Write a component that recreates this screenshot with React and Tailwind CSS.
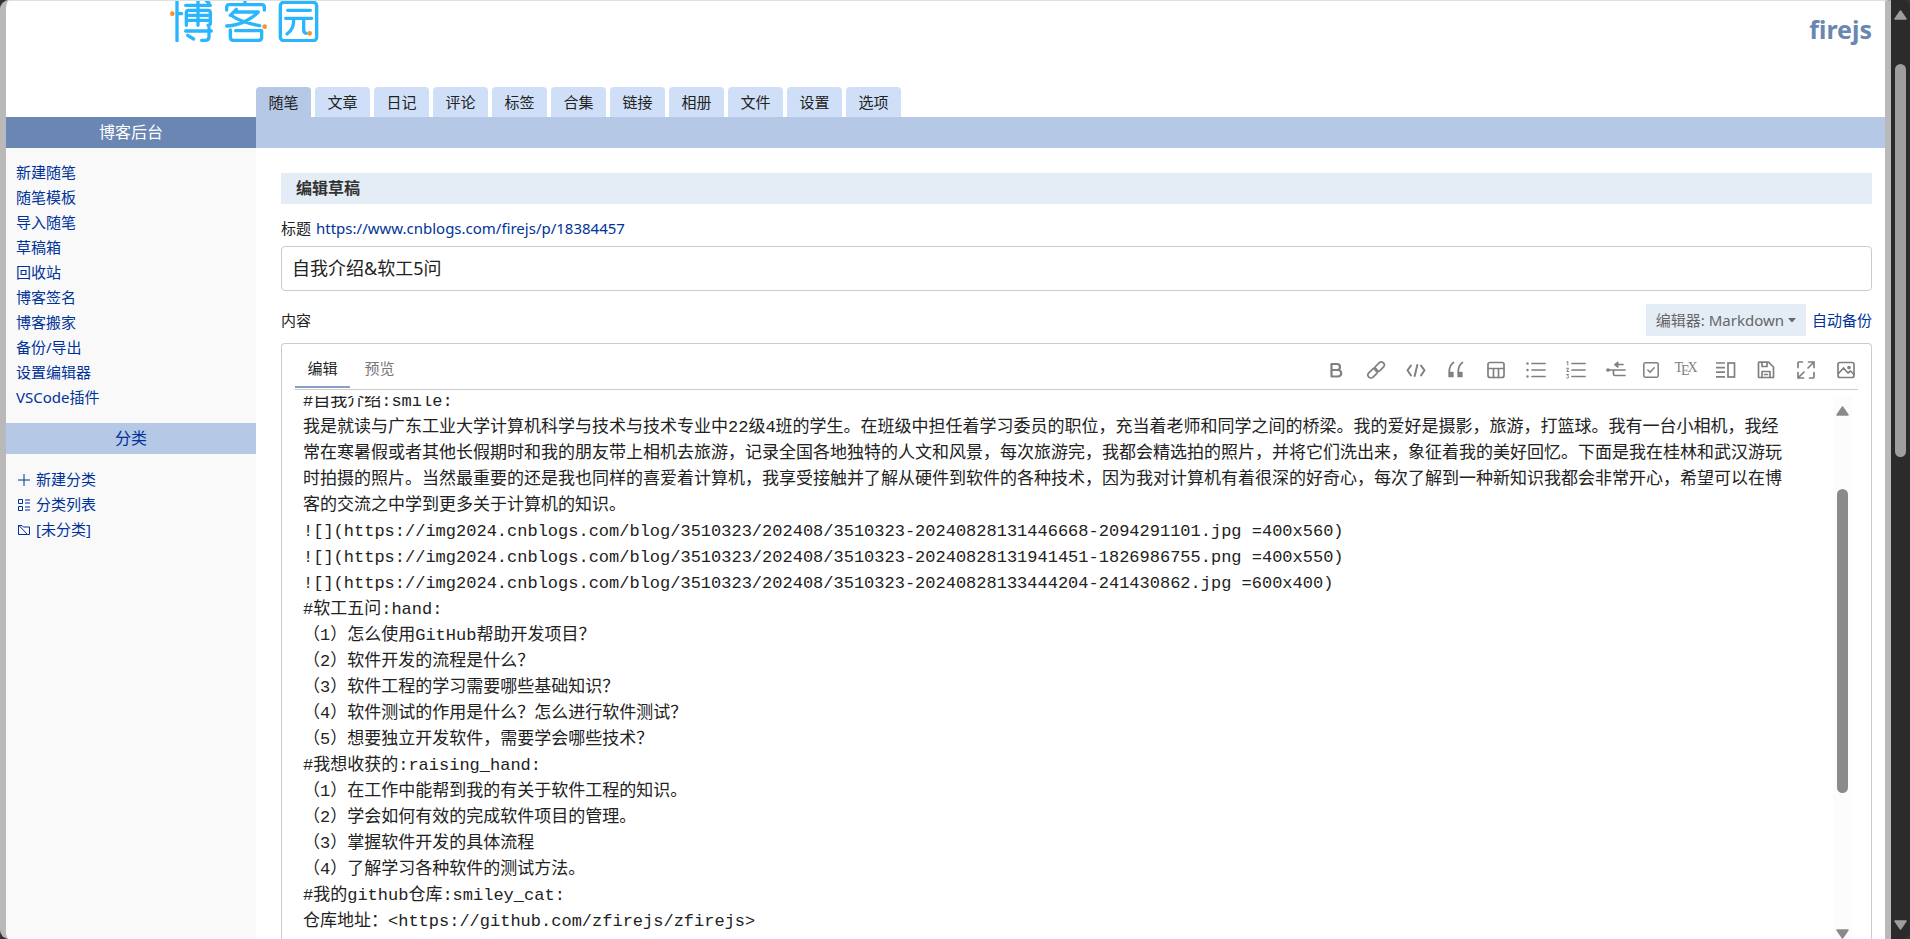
import { useEffect, useRef, useState } from 'react';
import clsx from 'clsx';

const tabs = ['随笔', '文章', '日记', '评论', '标签', '合集', '链接', '相册', '文件', '设置', '选项'];

const links = [
  '新建随笔',
  '随笔模板',
  '导入随笔',
  '草稿箱',
  '回收站',
  '博客签名',
  '博客搬家',
  '备份/导出',
  '设置编辑器',
  'VSCode插件',
];

const draft = `#自我介绍:smile:
我是就读与广东工业大学计算机科学与技术与技术专业中22级4班的学生。在班级中担任着学习委员的职位，充当着老师和同学之间的桥梁。我的爱好是摄影，旅游，打篮球。我有一台小相机，我经常在寒暑假或者其他长假期时和我的朋友带上相机去旅游，记录全国各地独特的人文和风景，每次旅游完，我都会精选拍的照片，并将它们洗出来，象征着我的美好回忆。下面是我在桂林和武汉游玩时拍摄的照片。当然最重要的还是我也同样的喜爱着计算机，我享受接触并了解从硬件到软件的各种技术，因为我对计算机有着很深的好奇心，每次了解到一种新知识我都会非常开心，希望可以在博客的交流之中学到更多关于计算机的知识。
![](https://img2024.cnblogs.com/blog/3510323/202408/3510323-20240828131446668-2094291101.jpg =400x560)
![](https://img2024.cnblogs.com/blog/3510323/202408/3510323-20240828131941451-1826986755.png =400x550)
![](https://img2024.cnblogs.com/blog/3510323/202408/3510323-20240828133444204-241430862.jpg =600x400)
#软工五问:hand:
（1）怎么使用GitHub帮助开发项目？
（2）软件开发的流程是什么？
（3）软件工程的学习需要哪些基础知识？
（4）软件测试的作用是什么？怎么进行软件测试？
（5）想要独立开发软件，需要学会哪些技术？
#我想收获的:raising_hand:
（1）在工作中能帮到我的有关于软件工程的知识。
（2）学会如何有效的完成软件项目的管理。
（3）掌握软件开发的具体流程
（4）了解学习各种软件的测试方法。
#我的github仓库:smiley_cat:
仓库地址：<https://github.com/zfirejs/zfirejs>`;

const Logo = () => (
  <svg width="160" height="42" viewBox="0 0 480 126" role="img" aria-label="博客园">
    <g fill="none" stroke="#29b6ff" strokeWidth="10" strokeLinecap="round" strokeLinejoin="round">
      <path d="M36 -4V122M36 41H50" />
      <path d="M62 16H136M99 -4V76M124 3L132 9M64 76V38Q64 31 71 31H129Q136 31 136 38V70Q136 76 129 76M64 46H134M64 61H134" />
      <path d="M62 93H139M132 84V110Q132 121 121 121H110M68 106L86 117" />
      <path d="M185 30V22Q185 14 193 14H290Q298 14 298 22V30M240 0V12" />
      <path d="M214 28L196 46M208 36H280Q270 48 244 62Q218 76 185 78M202 48Q226 66 284 77" />
      <path d="M196 90V112Q196 121 205 121H281Q290 121 290 112V92H212" />
      <rect x="346" y="7" width="109" height="115" rx="10" />
      <path d="M368 31H436M362 55H440M386 58Q388 86 366 102M416 58V88Q416 100 424 100" />
    </g>
    <g fill="#ff8f28">
      <circle cx="22" cy="41" r="7" />
      <circle cx="299" cy="80" r="7" />
      <circle cx="434" cy="100" r="7" />
    </g>
  </svg>
);

const Icon = ({ children, size = 20 }) => (
  <svg
    width={size}
    height={size}
    viewBox="0 0 20 20"
    fill="none"
    stroke="currentColor"
    strokeWidth="1.7"
    strokeLinecap="round"
    strokeLinejoin="round"
    aria-hidden="true"
  >
    {children}
  </svg>
);

const tools = [
  { name: '加粗', icon: <path strokeWidth="2.2" d="M5.5 4H11a3 3 0 0 1 0 6H5.5zM5.5 10H12a3.2 3.2 0 0 1 0 6.500H5.500z" /> },
  {
    name: '链接',
    icon: (
      <>
        <rect x="8" y="3.800" width="11" height="6" rx="3" transform="rotate(-45 13.500 6.800)" />
        <rect x="1.200" y="10.200" width="11" height="6" rx="3" transform="rotate(-45 6.700 13.200)" />
      </>
    ),
  },
  { name: '代码', icon: <path strokeWidth="2" d="M5 5.500L1.500 10.300L5 15.500M15 5.500L18.500 10.300L15 15.500M11.300 5L8.700 16" /> },
  {
    name: '引用',
    icon: (
      <>
        <path d="M7.500 2.500Q3.300 5.500 3.200 12M16.500 2.500Q12.300 5.500 12.200 12" />
        <path fill="currentColor" d="M3.200 12.500h3.600v4H3.200zM12.200 12.500h3.600v4h-3.600z" />
      </>
    ),
  },
  {
    name: '表格',
    icon: (
      <>
        <rect x="2" y="2.500" width="16" height="15" rx="2" />
        <path d="M2 8.500H18M7.500 8.500V17.500M12.500 8.500V17.500" />
      </>
    ),
  },
  {
    name: '无序列表',
    icon: (
      <>
        <path d="M6 3.500H19M6 10H19M6 16.500H19" />
        <path strokeWidth="2.500" d="M1.500 3.500h0M1.500 10h0M1.500 16.500h0" />
      </>
    ),
  },
  {
    name: '有序列表',
    icon: (
      <>
        <path d="M6 3.500H19M6 10H19M6 16.500H19" />
        <path strokeWidth="1" d="M.8 2L1.800 1.500V5M.6 8.300H2.600L.8 11.500H2.800M.6 14.500H2.600L1.600 16Q3 16.500 2.400 17.700Q1.500 18.600.6 18" />
      </>
    ),
  },
  {
    name: '流程图',
    icon: (
      <>
        <path d="M2.500 10H19M7.500 10V14Q7.500 15.500 9 15.500H19M10 4.500H17" />
        <path fill="currentColor" strokeWidth="1" d="M8.500 4.500L12 1.800V7.200z" />
        <circle cx="2" cy="10" r="1" fill="currentColor" />
      </>
    ),
  },
  {
    name: '任务列表',
    narrow: true,
    icon: (
      <>
        <rect x="2" y="2" width="16" height="16" rx="1.500" />
        <path d="M6.500 10L9 12.500L13.500 7.500" />
      </>
    ),
  },
  { name: '公式', tex: true },
  {
    name: '分栏',
    icon: (
      <>
        <path strokeLinecap="butt" d="M0 3H9M0 7.600H9M0 12.200H9M0 16.800H9" />
        <rect x="12" y="3" width="6.500" height="14" strokeLinejoin="miter" />
      </>
    ),
  },
  {
    name: '保存',
    icon: (
      <>
        <path d="M2.500 3Q2.500 2.200 3.300 2.200H12.500L17.500 7V17.500H3.300Q2.500 17.500 2.500 16.800z" />
        <path d="M6 2.500V6.500H11V2.500M6 17.500V11.500H14V17.500M8.500 14.500H11.500" />
      </>
    ),
  },
  {
    name: '全屏',
    icon: (
      <path d="M12.500 2H18V7.500M18 2L12 8M7.500 18H2V12.500M2 18L8 12M2 7.500V3Q2 2 3 2H6.500M18 12.500V17Q18 18 17 18H13.500" />
    ),
  },
  {
    name: '图片',
    icon: (
      <>
        <rect x="2" y="2.500" width="16" height="15" rx="2" />
        <path d="M2.500 13.500L7.500 8L12 13L14.500 11L18 14.500" />
        <circle cx="13" cy="7.500" r="1" />
      </>
    ),
  },
];

const Arrow = ({ down }) => (
  <svg width="13" height="10" viewBox="0 0 13 10" aria-hidden="true" className={clsx('shrink-0', down && 'rotate-180')}>
    <path d="M6.500 1L12 9H1z" fill="currentColor" stroke="currentColor" strokeWidth="1.500" strokeLinejoin="round" />
  </svg>
);

const Sidebar = () => (
  <aside className="w-[250px] shrink-0 bg-[#f9f9f9] text-[15px] text-[#003399]">
    <h2 className="bg-[#6a86b3] text-center text-base leading-[31px] text-white">博客后台</h2>
    <ul className="pt-3 pb-[13px] pl-[10px] leading-[25px]">
      {links.map((link) => (
        <li key={link}>
          <a href="#">{link}</a>
        </li>
      ))}
    </ul>
    <h2 className="bg-[#b5c8e6] text-center text-base leading-[31px]">分类</h2>
    <ul className="pt-[13px] pl-[11px] leading-[25px]">
      <li>
        <a href="#" className="flex items-center gap-[5px]">
          <svg width="14" height="14" viewBox="0 0 14 14" fill="none" stroke="currentColor" aria-hidden="true">
            <path d="M7 1V13M1 7H13" />
          </svg>
          新建分类
        </a>
      </li>
      <li>
        <a href="#" className="flex items-center gap-[5px]">
          <svg width="14" height="14" viewBox="0 0 14 14" fill="none" stroke="currentColor" aria-hidden="true">
            <path d="M1.500 1.500h4v4h-4zM1.500 8.500h4v4h-4zM8 2h5M8 5h5M8 9h5M8 12h5" />
          </svg>
          分类列表
        </a>
      </li>
      <li>
        <a href="#" className="flex items-center gap-[5px]">
          <svg width="14" height="14" viewBox="0 0 14 14" fill="none" stroke="currentColor" aria-hidden="true">
            <path d="M3 2.500H1.500V11.500H10.500L2 2.500H5L6.500 4H12.500V11.500H10.500" />
          </svg>
          [未分类]
        </a>
      </li>
    </ul>
  </aside>
);

const Editor = () => {
  const [text, setText] = useState(draft);
  const area = useRef(null);

  useEffect(() => {
    area.current.scrollTop = 7;
  }, []);

  return (
    <div className="flex min-h-0 flex-1 flex-col rounded-t border border-b-0 border-[#ccc] px-[13px]">
      <div className="flex h-[46px] items-stretch justify-between border-b border-[#ccc]">
        <div className="flex pb-px text-[15px]">
          <button type="button" className="w-[55px] border-b-2 border-[#8a9fc8] pt-[6px] text-[#222]">
            编辑
          </button>
          <button type="button" className="w-[59px] border-b-2 border-transparent pt-[6px] text-[#777]">
            预览
          </button>
        </div>
        <div className="-mr-2 flex items-center pt-[6px] text-[#808080]">
          {tools.map((tool) => (
            <button
              key={tool.name}
              type="button"
              aria-label={tool.name}
              className={clsx('flex justify-center', tool.narrow ? 'w-[30px]' : 'w-10')}
            >
              {tool.tex ? (
                <span className="flex font-['Liberation_Serif',serif] text-sm leading-4" aria-hidden="true">
                  T<span className="-ml-0.5 pt-[3px]">E</span>
                  <span className="-ml-0.5">X</span>
                </span>
              ) : (
                <Icon size={tool.narrow ? 18 : 20}>{tool.icon}</Icon>
              )}
            </button>
          ))}
        </div>
      </div>
      <div className="mt-[6px] mr-[6px] flex min-h-0 flex-1">
        <textarea
          ref={area}
          aria-label="内容"
          value={text}
          onChange={(e) => setText(e.target.value)}
          spellCheck={false}
          className="min-w-0 flex-1 resize-none break-all pr-11 pb-10 pl-2 font-['Liberation_Mono','Noto_Sans_CJK_SC',monospace] text-[17px] leading-[26px] text-[#222] outline-none [scrollbar-width:none]"
        />
        <div className="flex w-[19px] flex-col items-center justify-between bg-[#fcfcfc] pt-[10px] text-[#8a8a8a]">
          <Arrow />
          <div className="mt-[73px] h-[304px] w-[11px] rounded-full bg-[#8a8a8a]" />
          <div className="flex-1" />
          <Arrow down />
        </div>
      </div>
    </div>
  );
};

export default function App() {
  const [active, setActive] = useState('随笔');
  const [title, setTitle] = useState('自我介绍&软工5问');

  return (
    <div className="flex h-screen overflow-hidden bg-[#333] font-['Noto_Sans','Noto_Sans_CJK_SC',sans-serif] text-[15px] text-[#222]">
      <div className="flex min-w-0 flex-1 overflow-hidden rounded-l-[9px] border-x-[6px] border-t border-x-[#b9b9b9] border-t-[#e0e0e0] bg-white">
        <div className="flex min-w-0 flex-1 flex-col">
          <header className="flex h-[86px] shrink-0 items-start justify-between pr-[13px] pl-[159px]">
            <a href="#" className="-mt-px">
              <Logo />
            </a>
            <a href="#" className="pt-2 text-[25px] leading-10 font-bold text-[#6a86b3]">
              firejs
            </a>
          </header>
          <nav className="flex h-[30px] shrink-0 gap-1 pl-[250px]">
            {tabs.map((tab) => (
              <button
                key={tab}
                type="button"
                onClick={() => setActive(tab)}
                className={clsx('w-[55px] rounded-t', tab === active ? 'bg-[#b5c8e6]' : 'bg-[#cfdff8]')}
              >
                {tab}
              </button>
            ))}
          </nav>
          <div className="flex min-h-0 flex-1">
            <Sidebar />
            <main className="flex min-w-0 flex-1 flex-col">
              <div className="h-[31px] shrink-0 bg-[#b5c8e6]" />
              <div className="flex min-h-0 flex-1 flex-col pt-[25px] pr-[13px] pl-[25px]">
                <h1 className="bg-[#e4ecf6] pl-[15px] text-base leading-[31px] font-bold text-[#333]">编辑草稿</h1>
                <div className="mt-3 flex gap-[5px] leading-[25px]">
                  <label htmlFor="title">标题</label>
                  <a href="#" className="text-[#003399]">
                    https://www.cnblogs.com/firejs/p/18384457
                  </a>
                </div>
                <input
                  id="title"
                  value={title}
                  onChange={(e) => setTitle(e.target.value)}
                  className="mt-[5px] h-[45px] shrink-0 rounded border border-[#ccc] px-[10px] pb-[3px] text-[18px] outline-none"
                />
                <div className="mt-[13px] mb-[7px] flex items-center justify-between">
                  <span>内容</span>
                  <div className="flex items-center gap-[6px]">
                    <button type="button" className="flex h-8 items-center gap-1 bg-[#e4ecf6] px-[10px] text-[#666]">
                      编辑器: Markdown
                      <svg width="8" height="5" viewBox="0 0 8 5" aria-hidden="true">
                        <path d="M0 0H8L4 4.500z" fill="currentColor" />
                      </svg>
                    </button>
                    <a href="#" className="text-[#003399]">
                      自动备份
                    </a>
                  </div>
                </div>
                <Editor />
              </div>
            </main>
          </div>
        </div>
      </div>
      <div className="flex w-[19px] shrink-0 flex-col items-center rounded-r-lg bg-[#2b2b2b] pt-[10px] pb-[9px] text-[#9e9e9e]">
        <Arrow />
        <div className="mt-11 h-[393px] w-[11px] rounded-full bg-[#9e9e9e]" />
        <div className="flex-1" />
        <Arrow down />
      </div>
    </div>
  );
}
